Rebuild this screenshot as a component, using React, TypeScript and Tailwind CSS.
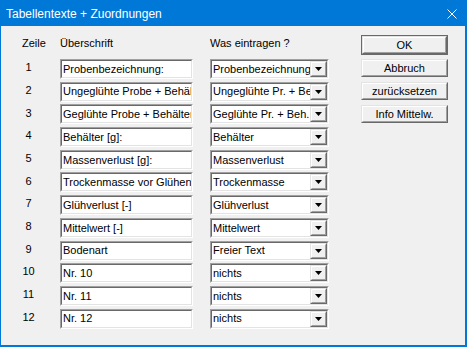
import React from "react";

const rows: [string, string][] = [
  ["Probenbezeichnung:", "Probenbezeichnung"],
  ["Ungeglühte Probe + Behälter", "Ungeglühte Pr. + Beh."],
  ["Geglühte Probe + Behälter", "Geglühte Pr. + Beh."],
  ["Behälter [g]:", "Behälter"],
  ["Massenverlust [g]:", "Massenverlust"],
  ["Trockenmasse vor Glühen", "Trockenmasse"],
  ["Glühverlust [-]", "Glühverlust"],
  ["Mittelwert [-]", "Mittelwert"],
  ["Bodenart", "Freier Text"],
  ["Nr. 10", "nichts"],
  ["Nr. 11", "nichts"],
  ["Nr. 12", "nichts"],
];

function Sunken({ className, children }: { className: string; children: React.ReactNode }) {
  return (
    <div className={"border border-t-[#a0a0a0] border-l-[#a0a0a0] border-b-white border-r-white " + className}>
      <div className="w-full h-full border border-t-[#696969] border-l-[#696969] border-b-[#e3e3e3] border-r-[#e3e3e3] bg-white flex items-center overflow-hidden">
        {children}
      </div>
    </div>
  );
}

function Raised({ className, children }: { className: string; children: React.ReactNode }) {
  return (
    <div className={"border border-t-[#e3e3e3] border-l-[#e3e3e3] border-b-[#696969] border-r-[#696969] " + className}>
      <div className="w-full h-full border border-t-white border-l-white border-b-[#a0a0a0] border-r-[#a0a0a0] bg-[#f0f0f0] flex items-center justify-center">
        {children}
      </div>
    </div>
  );
}

export default function App() {
  return (
    <div
      className="w-[467px] h-[347px] bg-[#0078d7] flex flex-col pl-px pr-[2px] pb-[2px] text-[11px] text-black"
      style={{ fontFamily: '"Liberation Sans", Arial, sans-serif' }}
    >
      <div className="h-[26px] flex items-center justify-between text-white shrink-0">
        <span className="pl-[5px] text-[12px] pt-px">Tabellentexte + Zuordnungen</span>
        <svg width="10" height="10" viewBox="0 0 10 10" className="mr-[8px] mt-[1px]">
          <path d="M0.5 0.5 L9.5 9.5 M9.5 0.5 L0.5 9.5" stroke="white" strokeWidth="1" />
        </svg>
      </div>
      <div className="flex-1 bg-[#f0f0f0] flex">
        <div className="flex flex-col">
          <div className="h-[33px] flex pt-[11px] leading-[13px]">
            <div className="w-[59px] pl-[21px]">Zeile</div>
            <div className="w-[150px]">Überschrift</div>
            <div>Was eintragen ?</div>
          </div>
          {rows.map(([a, b], i) => (
            <div key={i} className="h-[22.7px] flex items-start">
              <div className="w-[55px] h-[20px] flex items-center justify-center pb-[3px]">{i + 1}</div>
              <Sunken className="ml-[4px] w-[133px] h-[20px]">
                <span className="pl-[1px] whitespace-nowrap">{a}</span>
              </Sunken>
              <Sunken className="ml-[17px] w-[119px] h-[20px]">
                <div className="flex-1 h-full flex items-center overflow-hidden">
                  <span className="pl-[1px] whitespace-nowrap">{b}</span>
                </div>
                <Raised className="w-[17px] h-full shrink-0">
                  <svg width="7" height="4" viewBox="0 0 7 4">
                    <path d="M0 0 H7 L3.5 4 Z" fill="black" />
                  </svg>
                </Raised>
              </Sunken>
            </div>
          ))}
        </div>
        <div className="ml-[32px] pt-[9px] flex flex-col w-[87px]">
          <div className="h-[20px] border border-[#696969]">
            <Raised className="w-full h-full">OK</Raised>
          </div>
          <Raised className="mt-[4px] h-[18px] w-full">Abbruch</Raised>
          <Raised className="mt-[5px] h-[18px] w-full">zurücksetzen</Raised>
          <Raised className="mt-[5px] h-[18px] w-full">Info Mittelw.</Raised>
        </div>
      </div>
    </div>
  );
}
